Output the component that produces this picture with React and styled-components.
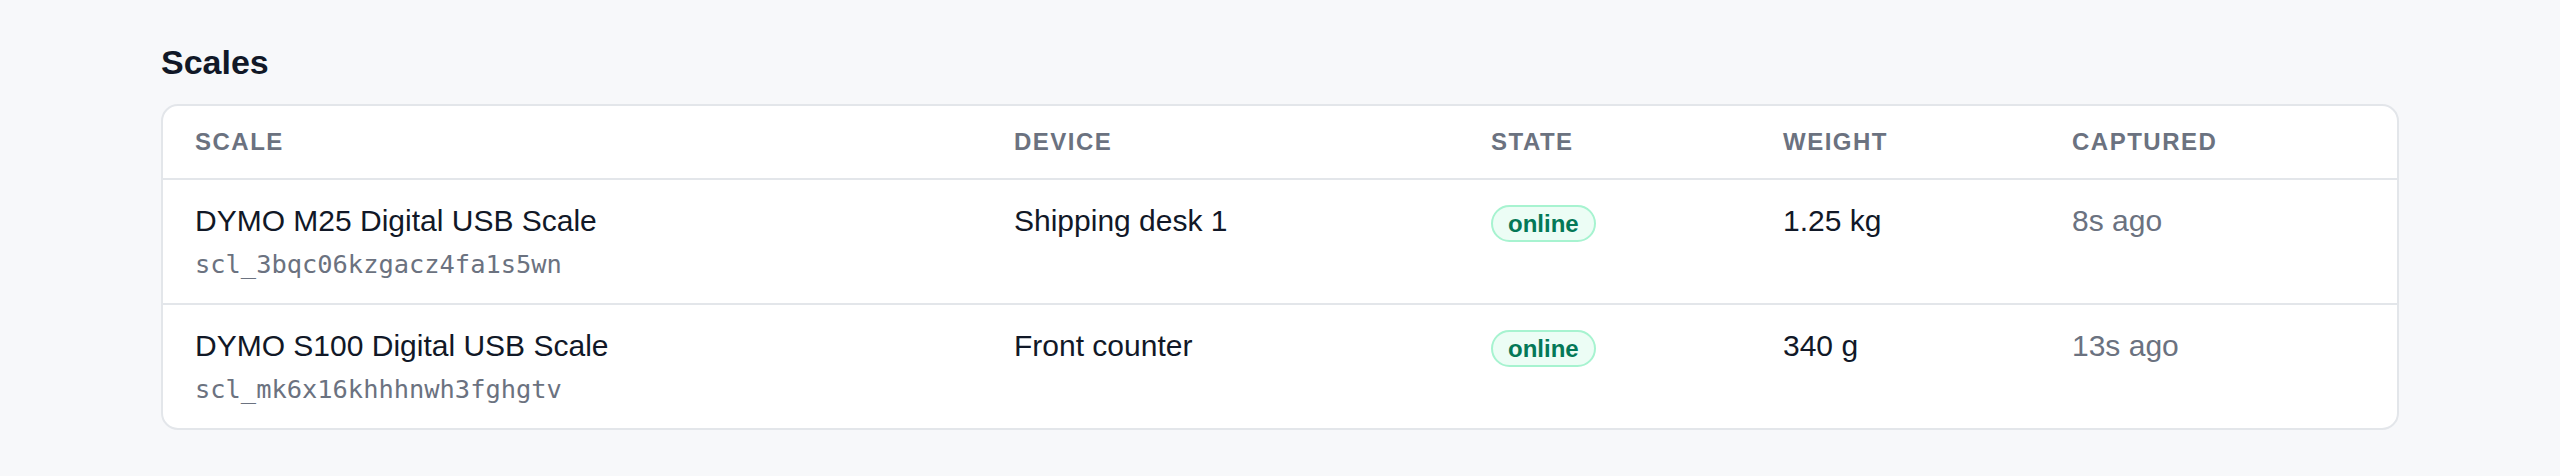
import styled, { createGlobalStyle } from 'styled-components';

const GlobalStyle = createGlobalStyle`
  html, body {
    margin: 0;
    padding: 0;
    background: #f7f8fa;
    font-family: 'Liberation Sans', Arial, sans-serif;
    color: #111827;
  }
`;

const scales = [
  {
    name: 'DYMO M25 Digital USB Scale',
    id: 'scl_3bqc06kzgacz4fa1s5wn',
    device: 'Shipping desk 1',
    state: 'online',
    weight: '1.25 kg',
    captured: '8s ago',
  },
  {
    name: 'DYMO S100 Digital USB Scale',
    id: 'scl_mk6x16khhhnwh3fghgtv',
    device: 'Front counter',
    state: 'online',
    weight: '340 g',
    captured: '13s ago',
  },
];

const columns = ['Scale', 'Device', 'State', 'Weight', 'Captured'];

export default function App() {
  return (
    <>
      <GlobalStyle />
      <Page>
        <Title>Scales</Title>
        <Card>
          <HeaderRow>
            {columns.map((c) => (
              <HeaderCell key={c}>{c}</HeaderCell>
            ))}
          </HeaderRow>
          {scales.map((s) => (
            <Row key={s.id}>
              <Cell>
                <Name>{s.name}</Name>
                <Id>{s.id}</Id>
              </Cell>
              <Cell>{s.device}</Cell>
              <Cell>
                <Badge>{s.state}</Badge>
              </Cell>
              <Cell>{s.weight}</Cell>
              <Cell muted>{s.captured}</Cell>
            </Row>
          ))}
        </Card>
      </Page>
    </>
  );
}

const Page = styled.div`
  width: 2238px;
  margin: 0 auto;
  padding-top: 37px;
`;

const Title = styled.h2`
  margin: 0 0 16px;
  font-size: 34px;
  line-height: 51px;
  font-weight: 700;
  color: #111827;
`;

const Card = styled.div`
  background: #ffffff;
  border: 2px solid #e3e6ea;
  border-radius: 17px;
  overflow: hidden;
`;

const grid = `
  display: grid;
  grid-template-columns: 819px 477px 292px 289px 1fr;
`;

const HeaderRow = styled.div`
  ${grid}
  border-bottom: 2px solid #e3e6ea;
`;

const HeaderCell = styled.div`
  padding: 18px 32px 19px;
  font-size: 24px;
  line-height: 35px;
  font-weight: 700;
  letter-spacing: 1.5px;
  text-transform: uppercase;
  color: #6b7280;
`;

const Row = styled.div`
  ${grid}
  & + & {
    border-top: 2px solid #e3e6ea;
  }
`;

const Cell = styled.div`
  padding: 18px 32px 19.5px;
  font-size: 30px;
  line-height: 45px;
  color: ${({ muted }) => (muted ? '#6b7280' : '#111827')};
`;

const Name = styled.div`
  font-size: 30px;
  line-height: 45px;
`;

const Id = styled.div`
  margin-top: 3px;
  font-family: 'DejaVu Sans Mono', 'Liberation Mono', monospace;
  font-size: 25.4px;
  line-height: 37.5px;
  color: #6b7280;
`;

const Badge = styled.span`
  display: inline-block;
  vertical-align: middle;
  padding: 2px 15px;
  border: 2px solid #a7f3d0;
  border-radius: 999px;
  background: #ecfdf5;
  color: #047857;
  font-size: 24px;
  line-height: 29px;
  font-weight: 700;
`;
